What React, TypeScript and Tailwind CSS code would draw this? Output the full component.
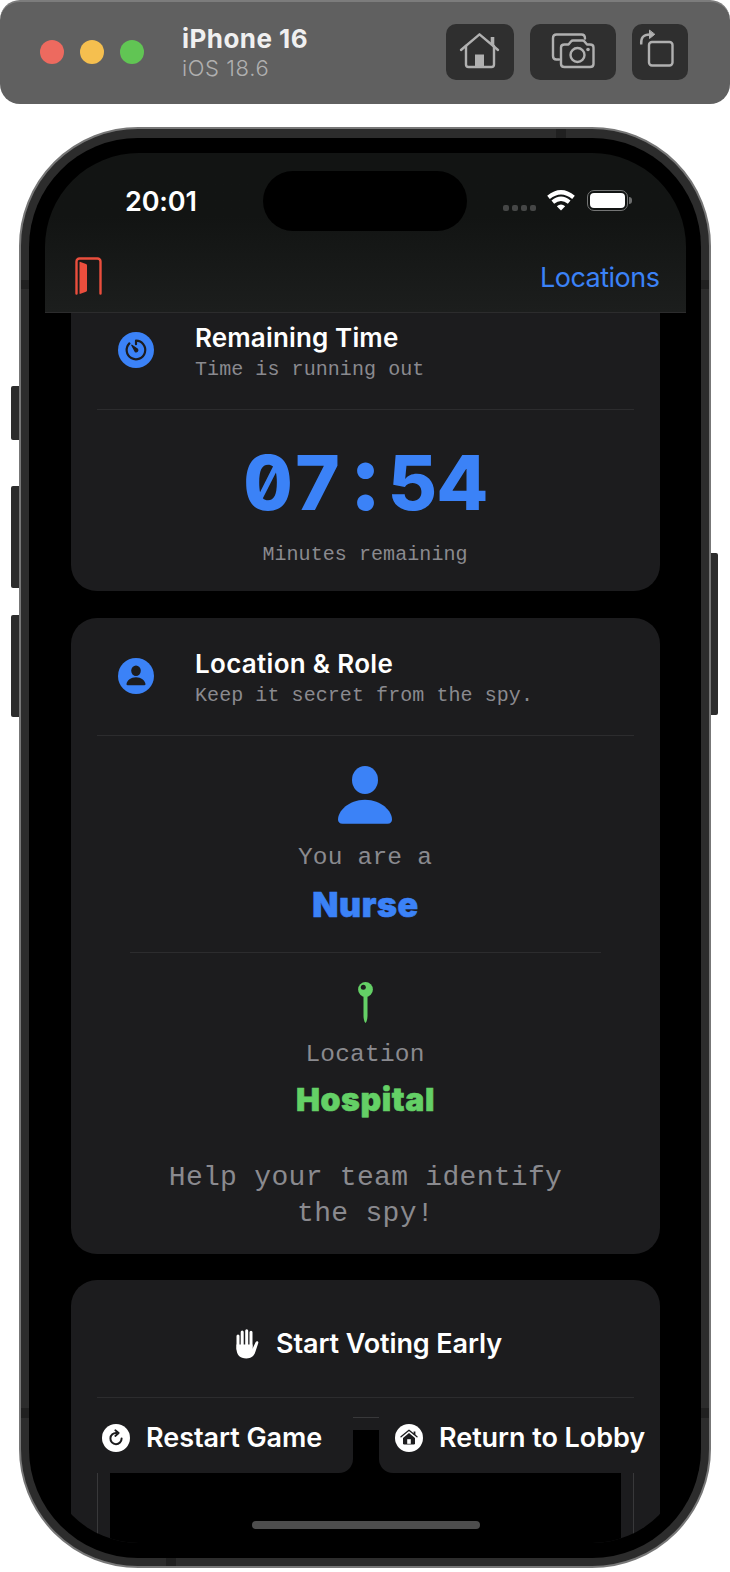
import React from "react";

const mono = "font-['Liberation_Mono',monospace]";

function Divider({ className = "" }: { className?: string }) {
  return <div className={`h-px shrink-0 bg-[#2c2c2e] ${className}`} />;
}

function SectionHeader({ icon, title, subtitle, titleClass }: { icon: React.ReactNode; title: string; subtitle: string; titleClass: string }) {
  return (
    <div>
      <div className="flex h-[88px] gap-[41px] pl-[21px]">
        <div className="mt-[11px] h-9 w-9 shrink-0">{icon}</div>
        <div className="whitespace-nowrap">
          <div className={`pt-px text-[26px] leading-8 font-semibold text-white ${titleClass}`}>{title}</div>
          <div className={`-mt-px text-[20px] leading-[34px] tracking-[0.07px] text-[#8a8a8f] ${mono}`}>{subtitle}</div>
        </div>
      </div>
      <Divider />
    </div>
  );
}

function TimerIcon() {
  return (
    <svg viewBox="0 0 36 36" className="h-9 w-9" fill="none">
      <circle cx="18" cy="18" r="18" fill="#3b82f7" />
      <path d="M18 12.200V8.700A9.300 9.300 0 1 1 11.400 11.400" stroke="#1c1c1e" strokeWidth="2.200" strokeLinecap="round" strokeLinejoin="round" />
      <path d="M13.800 13.200 19.600 17.300a1.700 1.700 0 0 1-2.300 2.300Z" fill="#1c1c1e" stroke="#1c1c1e" strokeWidth="1.200" strokeLinejoin="round" />
    </svg>
  );
}

function PersonBadge() {
  return (
    <svg viewBox="0 0 36 36" className="h-9 w-9">
      <circle cx="18" cy="18" r="18" fill="#3b82f7" />
      <ellipse cx="18" cy="12.700" rx="4.800" ry="5.200" fill="#1c1c1e" />
      <path d="M9.500 27.200c-.8 0-1.100-.5-1-1.200.5-3.700 4.400-6.800 9.500-6.800s9 3.100 9.500 6.800c.1.700-.2 1.200-1 1.200Z" fill="#1c1c1e" />
    </svg>
  );
}

function PersonIcon() {
  return (
    <svg viewBox="0 0 54 58" className="h-[58px] w-[54px]" fill="#3b82f7">
      <ellipse cx="27" cy="14" rx="13" ry="14" />
      <path d="M4.500 57.800C1.600 57.800 0 56.200 0 53.600 0 45.500 10.200 33.800 27 33.800S54 45.500 54 53.600c0 2.600-1.600 4.200-4.500 4.200Z" />
    </svg>
  );
}

function PinIcon() {
  return (
    <svg viewBox="0 0 15 41" className="h-[41px] w-[15px]" fill="#64d066">
      <path d="M5.500 13h4v20.500c0 3-.8 6.800-2 7.400-1.200-.6-2-4.400-2-7.400Z" />
      <circle cx="7.500" cy="7.500" r="7.400" />
      <circle cx="5.300" cy="5.200" r="2.500" fill="#1c1c1e" />
    </svg>
  );
}

function DoorIcon() {
  return (
    <svg viewBox="0 0 27 38" className="h-[38px] w-[27px]" fill="none">
      <path d="M1.500 36.500V4.500a3 3 0 0 1 3-3h18a3 3 0 0 1 3 3V36.500" stroke="#ea4e3d" strokeWidth="2.400" strokeLinecap="round" />
      <path d="M4.500 5.500q0-1 1-.6L11 7q1 .4 1 1.400v25q0 1-1 1.400l-5.500 2q-1 .4-1-.6Z" fill="#ea4e3d" />
    </svg>
  );
}

function HandIcon() {
  return (
    <svg viewBox="0 0 23 30" className="h-[30px] w-[23px]" fill="none" stroke="#fff" strokeLinecap="round">
      <path d="M2 7v13M6.200 3v14M10.700 1.700v15M15 3.200v15" strokeWidth="3" />
      <path d="M.5 15.500h16v4.200l3.100-6.400c.8-1.600 3.200-1 2.700.8l-2.900 8.700c-1.600 4.700-4.300 6.600-9 6.600C4 29.400.5 26 .5 19.500Z" fill="#fff" stroke="none" />
    </svg>
  );
}

function RestartIcon() {
  return (
    <svg viewBox="0 0 28 28" className="h-7 w-7 shrink-0" fill="none">
      <circle cx="14" cy="14" r="14" fill="#fff" />
      <path d="M14.500 9A5.600 5.600 0 1 0 19.600 14.500" stroke="#1c1c1e" strokeWidth="2" strokeLinecap="round" />
      <path d="M13.300 6.200 16.700 9l-3.400 3" stroke="#1c1c1e" strokeWidth="1.800" strokeLinecap="round" strokeLinejoin="round" />
    </svg>
  );
}

function LobbyIcon() {
  return (
    <svg viewBox="0 0 28 28" className="h-7 w-7 shrink-0" fill="none">
      <circle cx="14" cy="14" r="14" fill="#fff" />
      <path d="M6 12.800 14 6.200l8 6.600" stroke="#1c1c1e" strokeWidth="1.300" strokeLinecap="round" strokeLinejoin="round" />
      <path d="M19.500 7.500v3.500" stroke="#1c1c1e" strokeWidth="1.800" />
      <path d="M8 14 14 9.100l6 4.900v5.200q0 1.300-1.300 1.300H9.300Q8 20.500 8 19.200Z" fill="#1c1c1e" />
      <rect x="12.200" y="15.200" width="3.600" height="4.600" fill="#fff" />
    </svg>
  );
}

function ToolbarButton({ className, children }: { className: string; children: React.ReactNode }) {
  return <button className={`h-14 shrink-0 rounded-[10px] bg-[#2f2f2f] ${className}`}>{children}</button>;
}

function Toolbar() {
  return (
    <header className="flex h-[104px] w-full shrink-0 items-start rounded-[20px] border-t-2 border-[#7c7c7c] bg-[#606060]">
      <div className="mt-[38px] ml-10 flex gap-4">
        <span className="h-6 w-6 rounded-full bg-[#ed6a5f]" />
        <span className="h-6 w-6 rounded-full bg-[#f5bf4f]" />
        <span className="h-6 w-6 rounded-full bg-[#61c554]" />
      </div>
      <div className="mt-[21px] ml-[38px] w-[264px] whitespace-nowrap">
        <div className="text-[26px] leading-8 font-bold tracking-[0.45px] text-[#f0f0f0]">iPhone 16</div>
        <div className="-mt-px text-[22px] leading-7 font-light tracking-[0.6px] text-[#b0b0b0]">iOS 18.6</div>
      </div>
      <div className="mt-[22px] flex gap-4 text-[#b0b0b0]">
        <ToolbarButton className="w-[68px]">
          <svg viewBox="0 0 68 56" className="h-14 w-[68px]" fill="none" stroke="currentColor" strokeWidth="2.400" strokeLinecap="round" strokeLinejoin="round">
            <path d="M15 26 33.500 10.300 52 26" />
            <path d="M20 22v18.500q0 2.500 2.500 2.500h23q2.500 0 2.500-2.500V22" />
            <path d="M46.500 21v-8" strokeWidth="3.600" strokeLinecap="butt" />
            <path d="M29 43V30.500h9V43Z" fill="currentColor" stroke="none" />
          </svg>
        </ToolbarButton>
        <ToolbarButton className="w-[86px]">
          <svg viewBox="0 0 86 56" className="h-14 w-[86px]" fill="none" stroke="currentColor" strokeWidth="2.400" strokeLinecap="round" strokeLinejoin="round">
            <path d="M29 35.500H26.500q-3.500 0-3.500-3.500V14q0-3.500 3.500-3.500h25q3.500 0 3.500 4" />
            <path d="M34.500 20.500h4l2.500-3q.8-1 2-1h9.500q1.200 0 2 1l2.500 3h3q3.500 0 3.500 3v16.500q0 3-3.500 3h-25.500q-3.500 0-3.500-3v-16.500q0-3 3.500-3Z" />
            <circle cx="47.500" cy="31" r="7" />
            <circle cx="58" cy="25.500" r="1.800" fill="currentColor" stroke="none" />
          </svg>
        </ToolbarButton>
        <ToolbarButton className="w-14">
          <svg viewBox="0 0 56 56" className="h-14 w-14" fill="none" stroke="currentColor" strokeWidth="2.400" strokeLinecap="round" strokeLinejoin="round">
            <rect x="17" y="18" width="23.500" height="23.500" rx="3" />
            <path d="M9.200 20.500C8.700 14 11 10.500 18 10.500" strokeLinecap="butt" />
            <path d="M17.500 6.500v8l5-4Z" fill="currentColor" strokeWidth="1" />
          </svg>
        </ToolbarButton>
      </div>
    </header>
  );
}

function NavigationHeader() {
  return (
    <div className="flex h-[160px] shrink-0 flex-col border-b border-[#2c2c2d] bg-linear-to-b from-[#121413] from-40% to-[#1c1e1d]">
      <div className="flex h-[78px] shrink-0 items-start pt-[18px]">
        <div className="mt-[14px] w-[218px] pl-[80px] text-[27px] leading-[34px] font-semibold tracking-[-0.15px] text-white">20:01</div>
        <div className="h-[60px] w-[204px] rounded-full bg-black" />
        <div className="mt-[18px] ml-[36px] flex h-[22px] items-center">
          <div className="mt-[15px] flex gap-[3px]">
            {[0, 1, 2, 3].map((dot) => (
              <span key={dot} className="h-[6px] w-[6px] rounded-[2px] bg-[#454646]" />
            ))}
          </div>
          <svg viewBox="0 0 28 21" className="ml-[11px] h-[21px] w-7" fill="none" stroke="#fff" strokeWidth="4.200">
            <path d="M1.500 7.300Q14-2.800 26.500 7.300" />
            <path d="M5.800 12.100q8.200-6.700 16.400 0" />
            <path d="M9.800 16.300Q14 12.600 18.200 16.300L14 20.500Z" fill="#fff" stroke="none" />
          </svg>
          <div className="ml-3 h-[21px] w-[41px] rounded-[7px] border border-[#747575] p-0.5">
            <div className="h-full w-full rounded-[4px] bg-white" />
          </div>
          <span className="ml-px h-[7px] w-[2.500px] rounded-r-full bg-[#6c6d6d]" />
        </div>
      </div>
      <div className="flex flex-1 items-start justify-between pr-[26.500px] pl-[30px]">
        <div className="mt-[26px]"><DoorIcon /></div>
        <div className="mt-[30px] text-[27px] leading-[34px] tracking-[-0.5px] text-[#3b82f7]">Locations</div>
      </div>
    </div>
  );
}

function TimeCard() {
  return (
    <section className="flex h-[278px] shrink-0 flex-col rounded-b-[26px] bg-[#1c1c1e] px-[26px] pt-2">
      <SectionHeader icon={<TimerIcon />} title="Remaining Time" subtitle="Time is running out" titleClass="tracking-[0.15px]" />
      <div className="mt-8 flex h-20 justify-center text-[76px] leading-[80px] font-extrabold tracking-[0.5px] text-[#3b82f7] tabular-nums slashed-zero">
        <span>07</span>
        <span className="w-[46px] text-center text-[91px] leading-[70px] tracking-normal proportional-nums">:</span>
        <span>54</span>
      </div>
      <div className={`mt-[18px] pr-px text-center text-[20px] leading-[30px] tracking-[0.07px] text-[#8a8a8f] ${mono}`}>Minutes remaining</div>
    </section>
  );
}

function RoleCard() {
  return (
    <section className="mt-[27px] flex h-[636px] shrink-0 flex-col rounded-[26px] bg-[#1c1c1e] px-[26px] pt-[29px]">
      <SectionHeader icon={<PersonBadge />} title="Location & Role" subtitle="Keep it secret from the spy." titleClass="tracking-[0.3px]" />
      <div className="mt-[30px] flex justify-center pr-px"><PersonIcon /></div>
      <div className={`mt-[18px] pr-px text-center text-[24.500px] leading-8 tracking-[0.2px] text-[#8a8a8f] ${mono}`}>You are a</div>
      <div className="mt-[10px] text-center text-[34px] leading-[42px] font-black tracking-[0.6px] text-[#3b82f7] [-webkit-text-stroke:0.6px_#3b82f7]">Nurse</div>
      <Divider className="mx-[33px] mt-[26px]" />
      <div className="mt-[29px] flex justify-center"><PinIcon /></div>
      <div className={`mt-4 pr-px text-center text-[24.500px] leading-8 tracking-[0.2px] text-[#8a8a8f] ${mono}`}>Location</div>
      <div className="mt-[9px] text-center text-[32px] leading-10 font-black tracking-[0.6px] text-[#64d066] [-webkit-text-stroke:0.6px_#64d066]">Hospital</div>
      <div className={`mx-auto mt-10 w-[420px] text-center text-[28px] leading-9 tracking-[0.3px] text-[#8a8a8f] ${mono}`}>
        Help your team identify the spy!
      </div>
    </section>
  );
}

function ActionsCard() {
  return (
    <section className="mt-[26px] flex flex-1 flex-col rounded-t-[26px] bg-[#1c1c1e] px-[26px] text-[27px] font-semibold text-white">
      <button className="flex h-[117px] shrink-0 items-center justify-center gap-[17px] pt-[11px] pl-[7px] leading-[34px] tracking-[-0.1px] whitespace-nowrap">
        <HandIcon />
        <span>Start Voting Early</span>
      </button>
      <Divider />
      <div className="grid flex-1">
        <div className="mt-[19px] border-x border-t border-[#38383a] px-3 pt-3 [grid-area:1/1]">
          <div className="h-full bg-black" />
        </div>
        <div className="flex h-[75px] gap-[26px] leading-[34px] tracking-[-0.05px] whitespace-nowrap [grid-area:1/1]">
          <button className="flex w-[256px] shrink-0 items-center gap-4 rounded-br-[14px] bg-[#1c1c1e] pt-[5px] pl-[5px]">
            <RestartIcon />
            <span>Restart Game</span>
          </button>
          <button className="flex w-[255px] shrink-0 items-center gap-4 rounded-bl-[14px] bg-[#1c1c1e] pt-[5px] pl-4">
            <LobbyIcon />
            <span>Return to Lobby</span>
          </button>
        </div>
      </div>
    </section>
  );
}

export default function App() {
  return (
    <div className="flex h-[1572px] w-[730px] flex-col bg-white font-['Inter',sans-serif]">
      <Toolbar />
      <main className="relative mt-[23px] ml-[19px] h-[1441px] w-[692px] rounded-[119px] border-2 border-[#777777] bg-[#2c2c2c] pt-[9px] pl-2">
        <span className="absolute top-[257px] left-[-10px] h-[54px] w-2 rounded-l-[2px] bg-[#2c2c2c]" />
        <span className="absolute top-[357px] left-[-10px] h-[102px] w-2 rounded-l-[2px] bg-[#2c2c2c]" />
        <span className="absolute top-[486px] left-[-10px] h-[102px] w-2 rounded-l-[2px] bg-[#2c2c2c]" />
        <span className="absolute top-[424px] right-[-9px] h-[162px] w-[7px] rounded-r-[2px] bg-[#2c2c2c]" />
        <span className="absolute top-0 left-[535px] h-[9px] w-[10px] bg-[#202020]" />
        <span className="absolute bottom-0 left-[145px] h-[8px] w-[10px] bg-[#202020]" />
        <span className="absolute top-[151px] left-0 h-[9px] w-2 bg-[#202020]" />
        <span className="absolute top-[151px] right-0 h-[9px] w-2 bg-[#202020]" />
        <span className="absolute top-[1279px] left-0 h-[10px] w-2 bg-[#202020]" />
        <span className="absolute top-[1279px] right-0 h-[10px] w-2 bg-[#202020]" />
        <div className="h-[1420px] w-[672px] rounded-[109px] bg-black px-4 pt-[15px]">
          <div className="relative flex h-[1390px] w-[641px] flex-col overflow-hidden rounded-[94px] bg-black">
            <NavigationHeader />
            <div className="flex flex-1 flex-col px-[26px]">
              <TimeCard />
              <RoleCard />
              <ActionsCard />
            </div>
            <span className="absolute bottom-[14px] left-[207px] h-2 w-[228px] rounded-full bg-[#4d4d4d]" />
          </div>
        </div>
      </main>
    </div>
  );
}
